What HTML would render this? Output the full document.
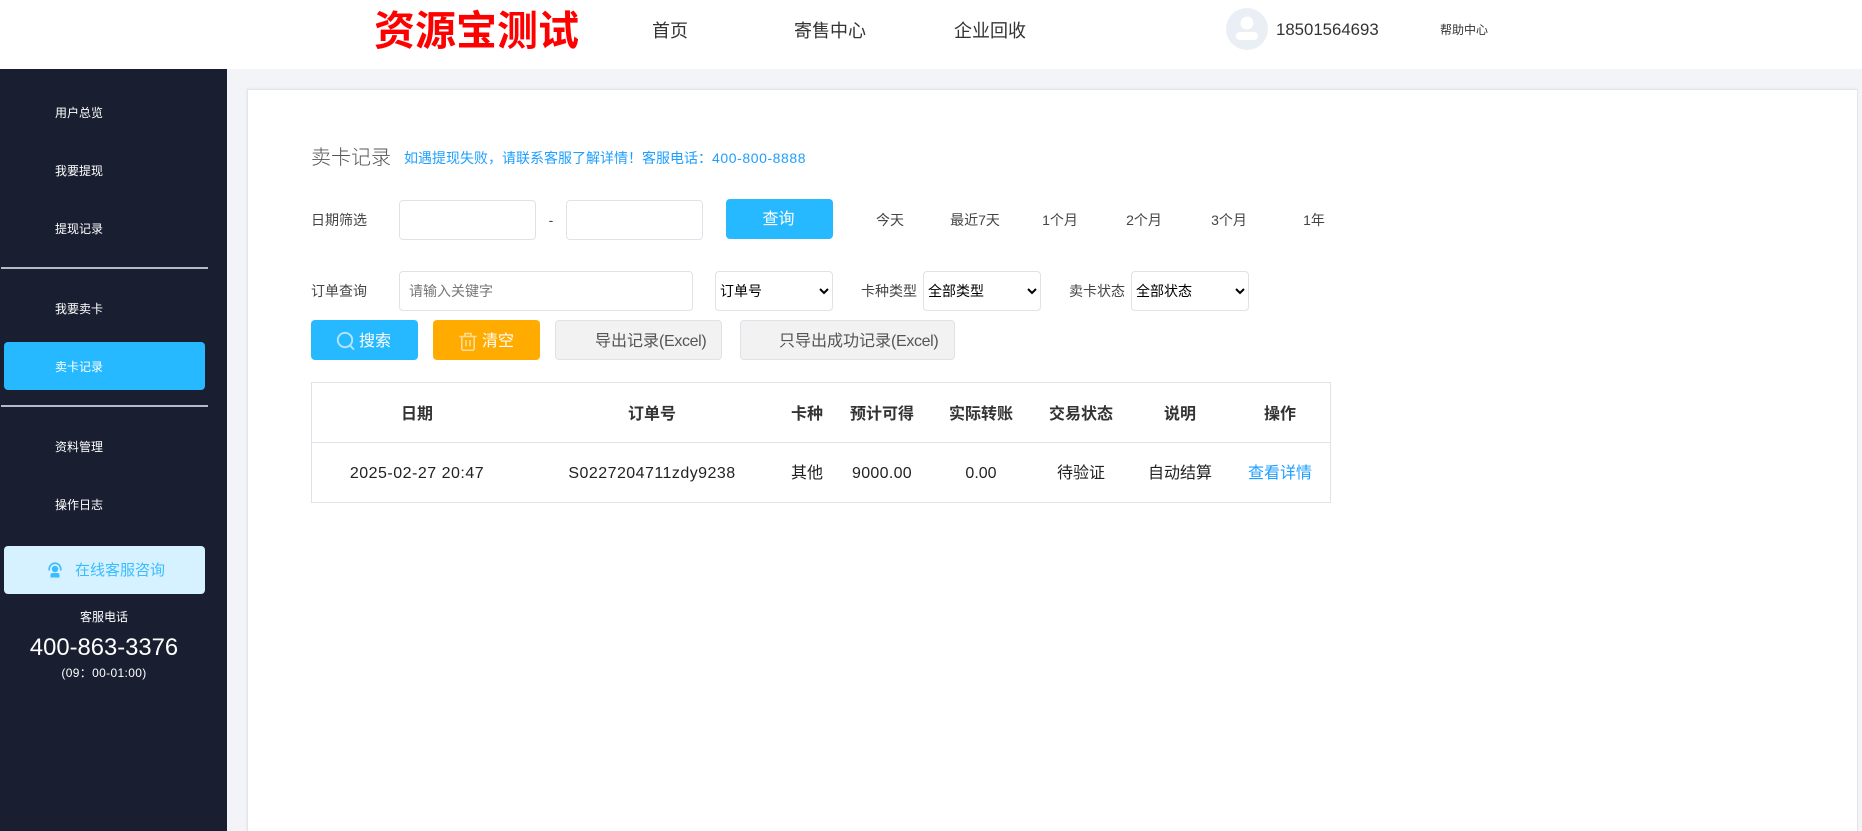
<!DOCTYPE html>
<html lang="zh-CN">
<head>
<meta charset="utf-8">
<title>卖卡记录</title>
<style>
html,body{margin:0;padding:0;width:1862px;height:831px;overflow:hidden;background:#f3f4f8}
body{position:relative;font-family:"Liberation Sans","Noto Sans CJK SC",sans-serif;color:#333}
.a,.t{position:absolute}
.t{white-space:nowrap;text-align:center;height:24px;line-height:24px}
.l{text-align:left}
.box{position:absolute;box-sizing:border-box;background:#fff;border:1px solid #dde3e8;border-radius:4px}
.btn{position:absolute;box-sizing:border-box;border-radius:4px;height:40px}
select{position:absolute;box-sizing:border-box;width:118px;height:40px;background:#fff;border:1px solid #dde3e8;border-radius:4px;font:14px "Liberation Sans","Noto Sans CJK SC",sans-serif;color:#000;padding:0;outline:none}
.side{color:#fff;font-size:12px}
.th{font-size:16px;font-weight:700;color:#333}
.td{font-size:16px;color:#222}
.f{font-size:14px;color:#444}
</style>
</head>
<body>
<!-- header -->
<div class="a" style="left:0;top:0;width:1862px;height:69px;background:#fff"></div>
<div class="t l" style="left:374px;top:6px;height:50px;line-height:50px;font-size:41px;font-weight:700;color:#f00">资源宝测试</div>
<div class="t l" style="left:652px;top:19px;font-size:18px;color:#333">首页</div>
<div class="t l" style="left:794px;top:19px;font-size:18px;color:#333">寄售中心</div>
<div class="t l" style="left:954px;top:19px;font-size:18px;color:#333">企业回收</div>
<svg class="a" style="left:1226px;top:8px" width="42" height="42" viewBox="0 0 42 42">
<circle cx="21" cy="21" r="21" fill="#e9eff4"/>
<ellipse cx="21" cy="15" rx="6.5" ry="6.5" fill="#fff"/>
<rect x="10" y="24" width="22" height="8" rx="4" fill="#fff"/>
</svg>
<div class="t l" style="left:1276px;top:18px;font-size:16.8px;color:#333">18501564693</div>
<div class="t l" style="left:1440px;top:18px;font-size:12px;color:#333">帮助中心</div>

<!-- sidebar -->
<div class="a" style="left:0;top:69px;width:227px;height:762px;background:#191e30"></div>
<div class="t l side" style="left:55px;top:101px">用户总览</div>
<div class="t l side" style="left:55px;top:159px">我要提现</div>
<div class="t l side" style="left:55px;top:217px">提现记录</div>
<div class="a" style="left:1px;top:267px;width:207px;height:2px;background:#b8b9c4"></div>
<div class="t l side" style="left:55px;top:297px">我要卖卡</div>
<div class="a" style="left:4px;top:342px;width:201px;height:48px;background:#27b9ff;border-radius:4px"></div>
<div class="t l side" style="left:55px;top:355px">卖卡记录</div>
<div class="a" style="left:1px;top:405px;width:207px;height:2px;background:#b8b9c4"></div>
<div class="t l side" style="left:55px;top:435px">资料管理</div>
<div class="t l side" style="left:55px;top:493px">操作日志</div>
<div class="a" style="left:4px;top:546px;width:201px;height:48px;background:#d6f1ff;border-radius:4px"></div>
<svg class="a" style="left:48px;top:562px" width="14" height="16" viewBox="0 0 14 16">
<path d="M1.2 8.5V7a5.8 5.8 0 0 1 11.6 0v1.5" fill="none" stroke="#3bbcff" stroke-width="1.6"/>
<circle cx="7" cy="7" r="3.2" fill="#3bbcff"/>
<path d="M2.5 15.5v-2.5c0-1.2 1-2 2-2h5c1 0 2 .8 2 2v2.5z" fill="#3bbcff"/>
</svg>
<div class="t l" style="left:75px;top:559px;font-size:15px;color:#3bbcff">在线客服咨询</div>
<div class="t side" style="left:0;top:605px;width:208px">客服电话</div>
<div class="t" style="left:0;top:636px;width:208px;font-size:23.8px;color:#fff">400-863-3376</div>
<div class="t side" style="left:0;top:661px;width:208px;letter-spacing:.35px">(09：00-01:00)</div>

<!-- card -->
<div class="a" style="left:247px;top:89px;width:1611px;height:760px;box-sizing:border-box;background:#fff;border:1px solid #e1e4e9;box-shadow:-1px -1px 2px rgba(0,0,0,.04)"></div>
<div class="t l" style="left:311px;top:146px;font-size:20px;color:#555;font-weight:300">卖卡记录</div>
<div class="t l" style="left:404px;top:146px;font-size:14px;color:#1e9fff">如遇提现失败，请联系客服了解详情！客服电话：<span style="letter-spacing:.58px">400-800-8888</span></div>

<!-- date row -->
<div class="t l f" style="left:311px;top:208px">日期筛选</div>
<div class="box" style="left:399px;top:200px;width:137px;height:40px"></div>
<div class="t f" style="left:541px;top:208px;width:20px">-</div>
<div class="box" style="left:566px;top:200px;width:137px;height:40px"></div>
<div class="btn" style="left:726px;top:199px;width:107px;background:#27b9ff"></div>
<div class="t" style="left:725px;top:208px;width:107px;font-size:16px;color:#fff">查询</div>
<div class="t f" style="left:850px;top:208px;width:80px">今天</div>
<div class="t f" style="left:935px;top:208px;width:80px">最近7天</div>
<div class="t f" style="left:1020px;top:208px;width:80px">1个月</div>
<div class="t f" style="left:1104px;top:208px;width:80px">2个月</div>
<div class="t f" style="left:1189px;top:208px;width:80px">3个月</div>
<div class="t f" style="left:1274px;top:208px;width:80px">1年</div>

<!-- order row -->
<div class="t l f" style="left:311px;top:279px">订单查询</div>
<div class="box" style="left:399px;top:271px;width:294px;height:40px"></div>
<div class="t l" style="left:409px;top:279px;font-size:14px;color:#777">请输入关键字</div>
<select style="left:715px;top:271px"><option>订单号</option></select>
<div class="t l f" style="left:861px;top:279px">卡种类型</div>
<select style="left:923px;top:271px"><option>全部类型</option></select>
<div class="t l f" style="left:1069px;top:279px">卖卡状态</div>
<select style="left:1131px;top:271px"><option>全部状态</option></select>

<!-- buttons -->
<div class="btn" style="left:311px;top:320px;width:107px;background:#27b9ff"></div>
<svg class="a" style="left:336px;top:331px" width="20" height="20" viewBox="0 0 20 20" fill="none" stroke="#b4e6ff" stroke-width="1.9">
<circle cx="9" cy="9" r="7.2"/><path d="M14 14.5l3.5 3.5" stroke-linecap="round"/>
</svg>
<div class="t l" style="left:359px;top:330px;font-size:16px;color:#fff">搜索</div>
<div class="btn" style="left:433px;top:320px;width:107px;background:#ffab00"></div>
<svg class="a" style="left:459px;top:332px" width="18" height="19" viewBox="0 0 18 19" fill="none" stroke="#ffdd99" stroke-width="1.6">
<path d="M.5 4.5h17M6 4V1.5h6V4"/><path d="M2.8 5v11.5a1.8 1.8 0 0 0 1.8 1.8h8.8a1.8 1.8 0 0 0 1.8-1.8V5"/><path d="M7 8v6.5M11 8v6.5"/>
</svg>
<div class="t l" style="left:482px;top:330px;font-size:16px;color:#fff">清空</div>
<div class="btn" style="left:555px;top:320px;width:167px;background:#f2f2f2;border:1px solid #dde3e8"></div>
<div class="t l" style="left:595px;top:330px;font-size:16px;color:#555">导出记录<span style="letter-spacing:-.35px">(Excel)</span></div>
<div class="btn" style="left:740px;top:320px;width:215px;background:#f2f2f2;border:1px solid #dde3e8"></div>
<div class="t l" style="left:779px;top:330px;font-size:16px;color:#555">只导出成功记录<span style="letter-spacing:-.35px">(Excel)</span></div>

<!-- table -->
<div class="a" style="left:311px;top:382px;width:1020px;height:121px;box-sizing:border-box;border:1px solid #dde3e8"></div>
<div class="a" style="left:311px;top:442px;width:1020px;height:1px;background:#dde3e8"></div>
<div class="t th" style="left:367px;top:403px;width:100px">日期</div>
<div class="t th" style="left:602px;top:403px;width:100px">订单号</div>
<div class="t th" style="left:757px;top:403px;width:100px">卡种</div>
<div class="t th" style="left:832px;top:403px;width:100px">预计可得</div>
<div class="t th" style="left:931px;top:403px;width:100px">实际转账</div>
<div class="t th" style="left:1031px;top:403px;width:100px">交易状态</div>
<div class="t th" style="left:1130px;top:403px;width:100px">说明</div>
<div class="t th" style="left:1230px;top:403px;width:100px">操作</div>
<div class="t td" style="left:317px;top:462px;width:200px;letter-spacing:.5px">2025-02-27 20:47</div>
<div class="t td" style="left:552px;top:462px;width:200px;letter-spacing:.46px">S0227204711zdy9238</div>
<div class="t td" style="left:757px;top:462px;width:100px">其他</div>
<div class="t td" style="left:832px;top:462px;width:100px;letter-spacing:.3px">9000.00</div>
<div class="t td" style="left:931px;top:462px;width:100px">0.00</div>
<div class="t td" style="left:1031px;top:462px;width:100px">待验证</div>
<div class="t td" style="left:1130px;top:462px;width:100px">自动结算</div>
<div class="t td" style="left:1230px;top:462px;width:100px;color:#1e9fff">查看详情</div>
</body>
</html>
